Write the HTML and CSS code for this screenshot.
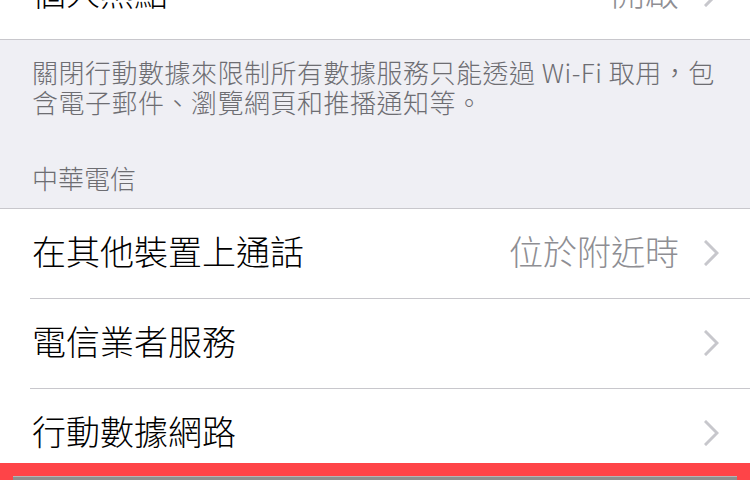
FILE: index.html
```html
<!DOCTYPE html>
<html lang="zh-Hant">
<head>
<meta charset="utf-8">
<link rel="stylesheet" href="styles.css">
</head>
<body>
<div class="screen">
  <div class="group group-top">
    <div class="row">
      <span class="label">個人熱點</span>
      <span class="value">開啟</span>
      <svg class="chev" viewBox="0 0 15 26" width="15" height="26"><polyline points="2,2 13,13 2,24"/></svg>
    </div>
  </div>
  <div class="footer">關閉行動數據來限制所有數據服務只能透過 Wi-Fi 取用，包含電子郵件、瀏覽網頁和推播通知等。</div>
  <div class="header">中華電信</div>
  <div class="group">
    <div class="row sep">
      <span class="label">在其他裝置上通話</span>
      <span class="value">位於附近時</span>
      <svg class="chev" viewBox="0 0 15 26" width="15" height="26"><polyline points="2,2 13,13 2,24"/></svg>
    </div>
    <div class="row sep">
      <span class="label">電信業者服務</span>
      <svg class="chev" viewBox="0 0 15 26" width="15" height="26"><polyline points="2,2 13,13 2,24"/></svg>
    </div>
    <div class="row">
      <span class="label">行動數據網路</span>
      <svg class="chev" viewBox="0 0 15 26" width="15" height="26"><polyline points="2,2 13,13 2,24"/></svg>
    </div>
  </div>
  <div class="bottom-bar"><div class="bar-inner"></div></div>
</div>
</body>
</html>
```
FILE: styles.css
```css
html, body {
  margin: 0;
  padding: 0;
}
body {
  width: 750px;
  height: 480px;
  overflow: hidden;
  background: #efeff4;
  font-family: "Noto Sans CJK TC", "Noto Sans", sans-serif;
}
.screen {
  position: relative;
  width: 750px;
  height: 480px;
  overflow: hidden;
}
.group {
  background: #fff;
  border-top: 1px solid #c8c7cc;
  border-bottom: 1px solid #c8c7cc;
}
.group-top {
  border-top: none;
  margin-top: -50px;
}
.row {
  height: 89px;
  display: flex;
  align-items: center;
  padding: 0 31px 0 32px;
  position: relative;
}
.row.sep {
  border-bottom: 1px solid #c8c7cc;
  margin-left: 30px;
  padding-left: 2px;
}
.label {
  flex: 1;
  font-size: 34px;
  font-weight: 300;
  color: #000;
  line-height: 40px;
  margin-top: -5px;
}
.value {
  font-size: 34px;
  font-weight: 300;
  color: #8e8e93;
  line-height: 40px;
  margin-right: 25px;
  margin-top: -5px;
}
.chev {
  display: block;
  margin-top: -1px;
}
.chev polyline {
  fill: none;
  stroke: #c7c7cc;
  stroke-width: 3;
  stroke-linecap: square;
  stroke-linejoin: miter;
}
.footer {
  padding: 17px 30px 0 32px;
  font-size: 26px;
  font-weight: 300;
  letter-spacing: 0.5px;
  line-height: 29.5px;
  color: #6d6d72;
}
.header {
  padding: 47px 32px 15px;
  font-size: 26px;
  font-weight: 300;
  line-height: 30px;
  color: #6d6d72;
}
.bottom-bar {
  position: absolute;
  left: 0;
  right: 0;
  top: 463px;
  height: 17px;
  background: #fe4448;
}
.bar-inner {
  position: absolute;
  left: 13px;
  right: 13px;
  top: 13px;
  height: 4px;
  background: #8e8e8e;
  border-top: 1px solid #b5b5b5;
}
```
